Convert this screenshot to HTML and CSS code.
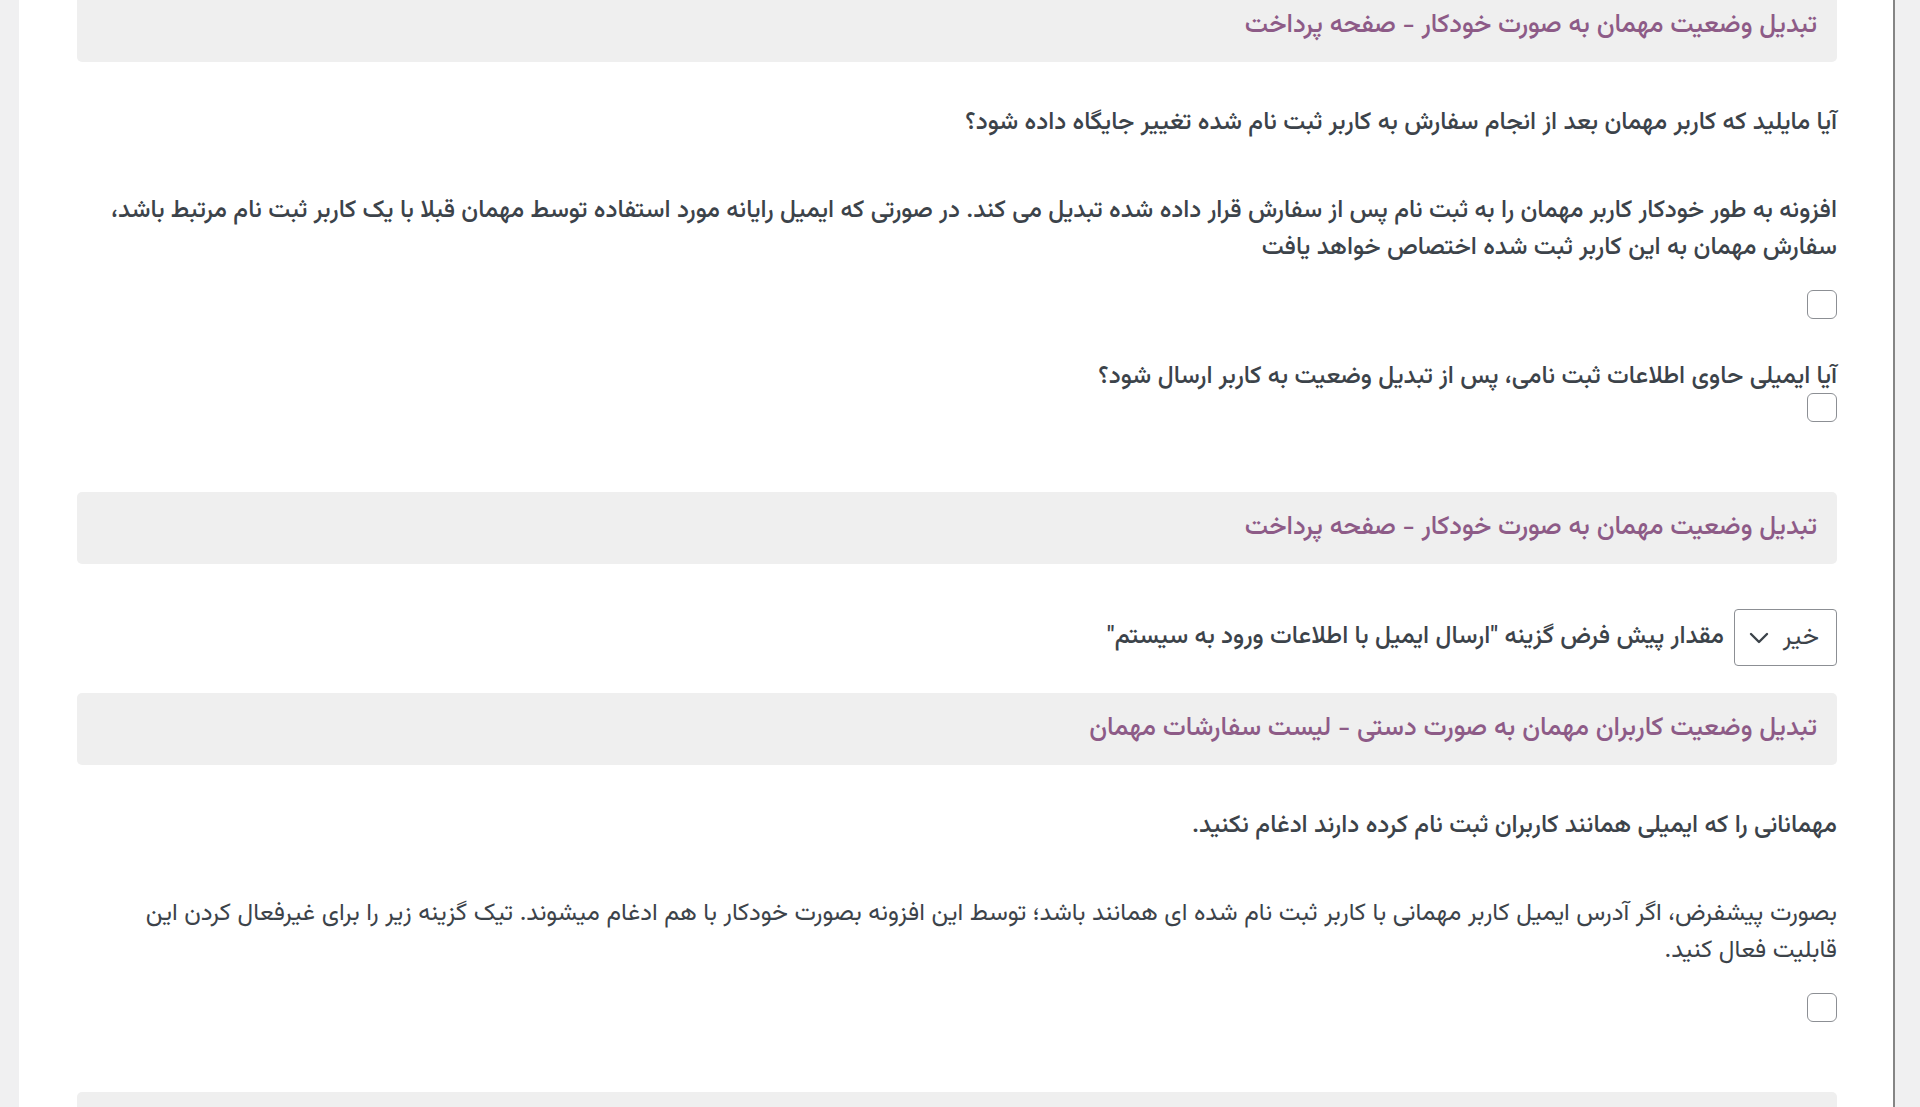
FILE: index.html
```html
<!DOCTYPE html>
<html lang="fa" dir="rtl">
<head>
    <meta charset="UTF-8">
    <meta name="viewport" content="width=device-width, initial-scale=1.0">
    <title>تنظیمات کاربران مهمان</title>
    <link rel="stylesheet" href="styles.css">
</head>
<body>
    <div class="panel">
        <h2 class="section-title first">تبدیل وضعیت مهمان به صورت خودکار - صفحه پرداخت</h2>

        <div class="field">
            <div class="field-label">آیا مایلید که کاربر مهمان بعد از انجام سفارش به کاربر ثبت نام شده تغییر جایگاه داده شود؟</div>
            <div class="field-desc strong">افزونه به طور خودکار کاربر مهمان را به ثبت نام پس از سفارش قرار داده شده تبدیل می کند. در صورتی که ایمیل رایانه مورد استفاده توسط مهمان قبلا با یک کاربر ثبت نام مرتبط باشد، سفارش مهمان به این کاربر ثبت شده اختصاص خواهد یافت</div>
            <input type="checkbox" class="check">
        </div>

        <div class="field">
            <div class="field-label">آیا ایمیلی حاوی اطلاعات ثبت نامی، پس از تبدیل وضعیت به کاربر ارسال شود؟</div>
            <input type="checkbox" class="check tight">
        </div>

        <h2 class="section-title">تبدیل وضعیت مهمان به صورت خودکار - صفحه پرداخت</h2>

        <div class="field inline">
            <div class="select-box">
                <span>خیر</span>
                <svg width="20" height="12" viewBox="0 0 20 12"><path d="M2 2 L10 10 L18 2" fill="none" stroke="#3c434a" stroke-width="2.4" stroke-linecap="round" stroke-linejoin="round"/></svg>
            </div>
            <span class="field-label">مقدار پیش فرض گزینه "ارسال ایمیل با اطلاعات ورود به سیستم"</span>
        </div>

        <h2 class="section-title">تبدیل وضعیت کاربران مهمان به صورت دستی - لیست سفارشات مهمان</h2>

        <div class="field">
            <div class="field-label">مهمانانی را که ایمیلی همانند کاربران ثبت نام کرده دارند ادغام نکنید.</div>
            <div class="field-desc">بصورت پیشفرض، اگر آدرس ایمیل کاربر مهمانی با کاربر ثبت نام شده ای همانند باشد؛ توسط این افزونه بصورت خودکار با هم ادغام میشوند. تیک گزینه زیر را برای غیرفعال کردن این قابلیت فعال کنید.</div>
            <input type="checkbox" class="check">
        </div>

        <div class="section-title"></div>
    </div>
</body>
</html>
```

FILE: styles.css
```css
/* Settings page */
html, body {
    margin: 0;
    padding: 0;
    height: 100%;
    overflow: hidden;
}
body {
    background-color: #f0f0f1;
    font-family: "Vazirmatn", "Noto Sans Arabic", "DejaVu Sans", sans-serif;
    color: #3c434a;
    font-size: 24.5px;
}
.panel {
    background-color: #ffffff;
    margin-left: 19px;
    margin-right: 25px;
    border-right: 2px solid #858585;
    padding: 0 56px 0 58px;
    min-height: 100%;
    overflow: hidden;
}
.section-title {
    margin: 70px 0 0;
    background-color: #efefef;
    border-radius: 5px;
    height: 72px;
    line-height: 72px;
    padding: 0 20px;
    font-size: 26px;
    font-weight: 500;
    color: #8d5b87;
}
.section-title.first {
    margin-top: -10px;
}
.field {
    margin-top: 43px;
}
.field + .field {
    margin-top: 40px;
}
.field-label {
    line-height: 37px;
    font-weight: 500;
}
.field-desc {
    margin-top: 51px;
    line-height: 36.5px;
}
.field-desc.strong {
    font-weight: 500;
}
.check {
    appearance: none;
    -webkit-appearance: none;
    display: block;
    width: 30px;
    height: 29px;
    margin: 24px 0 0;
    border: 1.5px solid #8c8f94;
    border-radius: 6px;
    background: #ffffff;
    box-sizing: border-box;
}
.check.tight {
    margin-top: -3px;
}
.field.inline {
    display: flex;
    align-items: center;
    gap: 10px;
    margin-top: 45px;
}
.field.inline + .section-title {
    margin-top: 27px;
}
.select-box {
    display: flex;
    align-items: center;
    gap: 12px;
    width: 103px;
    height: 57px;
    box-sizing: border-box;
    padding: 0 17px 0 14px;
    border: 1px solid #8c8f94;
    border-radius: 4px;
    font-size: 25px;
}
.select-box span {
    flex: 1;
}
```
